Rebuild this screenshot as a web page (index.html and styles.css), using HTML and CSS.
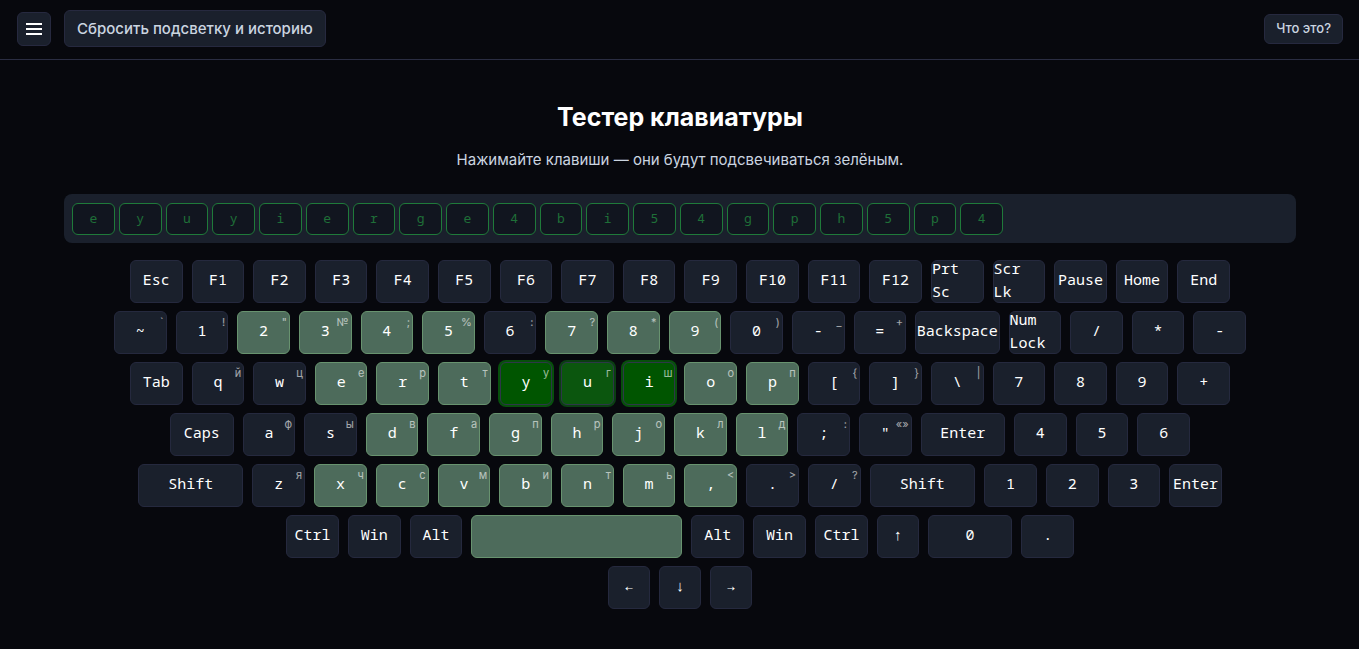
FILE: index.html
```html
<!DOCTYPE html>
<html lang="ru">
<head>
<meta charset="utf-8">
<meta name="viewport" content="width=device-width, initial-scale=1">
<title>Тестер клавиатуры</title>
<link rel="stylesheet" href="styles.css">
</head>
<body>
<header class="topbar">
  <div class="topbar-left">
    <button class="btn btn-menu" type="button" aria-label="Меню">
      <svg width="16" height="12" viewBox="0 0 16 12" aria-hidden="true"><path d="M0 0h16v2H0zM0 5h16v2H0zM0 10h16v2H0z" fill="#fff"/></svg>
    </button>
    <button class="btn btn-reset" type="button">Сбросить подсветку и историю</button>
  </div>
  <button class="btn btn-help" type="button">Что это?</button>
</header>
<main class="page">
  <h1 class="title">Тестер клавиатуры</h1>
  <p class="subtitle">Нажимайте клавиши — они будут подсвечиваться зелёным.</p>
  <section class="history" aria-label="История">
    <div class="history-list">
      <span class="chip">e</span><span class="chip">y</span><span class="chip">u</span><span class="chip">y</span><span class="chip">i</span><span class="chip">e</span><span class="chip">r</span><span class="chip">g</span><span class="chip">e</span><span class="chip">4</span><span class="chip">b</span><span class="chip">i</span><span class="chip">5</span><span class="chip">4</span><span class="chip">g</span><span class="chip">p</span><span class="chip">h</span><span class="chip">5</span><span class="chip">p</span><span class="chip">4</span>
    </div>
  </section>
  <section class="keyboard" aria-label="Клавиатура">
    <div class="row row-fn">
      <div class="key">Esc</div><div class="key">F1</div><div class="key">F2</div><div class="key">F3</div><div class="key">F4</div><div class="key">F5</div><div class="key">F6</div><div class="key">F7</div><div class="key">F8</div><div class="key">F9</div><div class="key">F10</div><div class="key">F11</div><div class="key">F12</div><div class="key">Prt Sc</div><div class="key">Scr Lk</div><div class="key">Pause</div><div class="key">Home</div><div class="key">End</div>
    </div>
    <div class="row row-digits">
      <div class="key">~<span class="alt">`</span></div>
      <div class="key">1<span class="alt">!</span></div>
      <div class="key used">2<span class="alt">"</span></div>
      <div class="key used">3<span class="alt">№</span></div>
      <div class="key used">4<span class="alt">;</span></div>
      <div class="key used">5<span class="alt">%</span></div>
      <div class="key">6<span class="alt">:</span></div>
      <div class="key used">7<span class="alt">?</span></div>
      <div class="key used">8<span class="alt">*</span></div>
      <div class="key used">9<span class="alt">(</span></div>
      <div class="key">0<span class="alt">)</span></div>
      <div class="key">-<span class="alt">_</span></div>
      <div class="key">=<span class="alt">+</span></div>
      <div class="key wide">Backspace</div>
      <div class="key">Num Lock</div>
      <div class="key">/</div><div class="key">*</div><div class="key">-</div>
    </div>
    <div class="row row-top">
      <div class="key">Tab</div>
      <div class="key">q<span class="alt">й</span></div>
      <div class="key">w<span class="alt">ц</span></div>
      <div class="key used">e<span class="alt">е</span></div>
      <div class="key used">r<span class="alt">р</span></div>
      <div class="key used">t<span class="alt">т</span></div>
      <div class="key active">y<span class="alt">у</span></div>
      <div class="key active fading">u<span class="alt">г</span></div>
      <div class="key active">i<span class="alt">ш</span></div>
      <div class="key used">o<span class="alt">о</span></div>
      <div class="key used">p<span class="alt">п</span></div>
      <div class="key">[<span class="alt">{</span></div>
      <div class="key">]<span class="alt">}</span></div>
      <div class="key">\<span class="alt">|</span></div>
      <div class="key">7</div><div class="key">8</div><div class="key">9</div><div class="key">+</div>
    </div>
    <div class="row row-home">
      <div class="key caps">Caps</div>
      <div class="key">a<span class="alt">ф</span></div>
      <div class="key">s<span class="alt">ы</span></div>
      <div class="key used">d<span class="alt">в</span></div>
      <div class="key used">f<span class="alt">а</span></div>
      <div class="key used">g<span class="alt">п</span></div>
      <div class="key used">h<span class="alt">р</span></div>
      <div class="key used">j<span class="alt">о</span></div>
      <div class="key used">k<span class="alt">л</span></div>
      <div class="key used">l<span class="alt">д</span></div>
      <div class="key">;<span class="alt">:</span></div>
      <div class="key">"<span class="alt">«»</span></div>
      <div class="key wide">Enter</div>
      <div class="key">4</div><div class="key">5</div><div class="key">6</div>
    </div>
    <div class="row row-bottom">
      <div class="key shift">Shift</div>
      <div class="key">z<span class="alt">я</span></div>
      <div class="key used">x<span class="alt">ч</span></div>
      <div class="key used">c<span class="alt">с</span></div>
      <div class="key used">v<span class="alt">м</span></div>
      <div class="key used">b<span class="alt">и</span></div>
      <div class="key used">n<span class="alt">т</span></div>
      <div class="key used">m<span class="alt">ь</span></div>
      <div class="key used">,<span class="alt">&lt;</span></div>
      <div class="key">.<span class="alt">&gt;</span></div>
      <div class="key">/<span class="alt">?</span></div>
      <div class="key shift">Shift</div>
      <div class="key">1</div><div class="key">2</div><div class="key">3</div><div class="key">Enter</div>
    </div>
    <div class="row row-space">
      <div class="key">Ctrl</div><div class="key">Win</div><div class="key">Alt</div>
      <div class="key space used"></div>
      <div class="key">Alt</div><div class="key">Win</div><div class="key">Ctrl</div>
      <div class="key arrow">↑</div><div class="key wide">0</div><div class="key">.</div>
    </div>
    <div class="row row-arrows">
      <div class="key arrow">←</div><div class="key arrow">↓</div><div class="key arrow">→</div>
    </div>
  </section>
</main>
</body>
</html>
```
FILE: styles.css
```css
* { box-sizing: border-box; }

body {
  margin: 0;
  background: #07080d;
  color: #fff;
  font-family: Inter, "Liberation Sans", sans-serif;
  font-optical-sizing: none;
}

.topbar {
  display: flex;
  align-items: center;
  justify-content: space-between;
  padding: 10px 16px 12px;
  border-bottom: 1px solid #2a2d42;
}

.topbar-left {
  display: flex;
  align-items: center;
  gap: 13px;
  padding-left: 1px;
}

.btn {
  display: flex;
  align-items: center;
  justify-content: center;
  border: 1px solid #26293f;
  border-radius: 6px;
  background: #1a202c;
  color: #cbd5e0;
  font-family: inherit;
  font-weight: 500;
}

.btn-menu { width: 34px; height: 34px; padding: 0; }
.btn-reset { padding: 6px 12px; font-size: 15px; line-height: 23px; }
.btn-help { padding: 3px 11px 5px; font-size: 13px; line-height: 20px; }

.page { padding: 40px 63px 40px 64px; }

.title {
  margin: 0;
  font-size: 25px;
  line-height: 34px;
  font-weight: 700;
  text-align: center;
}

.subtitle {
  margin: 14px 0 0;
  color: #cbd5e0;
  font-size: 15px;
  line-height: 23px;
  text-align: center;
}

.history {
  margin-top: 23px;
  padding: 9px 8px 8px;
  border-radius: 8px;
  background: #1a202c;
}

.history-list {
  display: flex;
  gap: 4px;
  max-width: 931px;
}

.chip {
  flex: 1;
  height: 32px;
  border: 1px solid #1f7a3a;
  border-radius: 6px;
  background: #11151f;
  color: #1f6f38;
  font-family: "Noto Sans Mono", "DejaVu Sans Mono", monospace;
  font-size: 13px;
  line-height: 28px;
  text-align: center;
}

.keyboard {
  display: flex;
  flex-direction: column;
  align-items: center;
  gap: 8px;
  margin-top: 17px;
}

.row { display: flex; gap: 9px; width: 100%; }
.row-fn, .row-top { max-width: 1100px; }
.row-digits { max-width: 1132px; }
.row-home { max-width: 1020px; }
.row-bottom { max-width: 1084px; }
.row-space { max-width: 788px; }
.row-arrows { max-width: 144px; }

.key {
  position: relative;
  display: flex;
  flex: 0 1 53px;
  align-items: center;
  justify-content: center;
  min-width: 0;
  height: 43px;
  padding-bottom: 4px;
  border: 1px solid #25293e;
  border-radius: 6px;
  background: #1a202c;
  font-family: "Noto Sans Mono", "DejaVu Sans Mono", monospace;
  font-size: 15px;
  line-height: 23px;
}

.arrow { flex-basis: 42px; }
.caps { flex-basis: 64px; }
.wide { flex-basis: 85px; }
.shift { flex-basis: 106px; }
.space { flex-basis: 212px; }

.used { border-color: #68936f; background: #4d6b5b; }

.active {
  border-color: #2d3748;
  background: #005500;
  box-shadow: 0 0 0 2px #07500c;
}

.fading { background: #0b560e; box-shadow: 0 0 0 2px #0a3f12; }

.alt {
  position: absolute;
  top: 2px;
  right: 2px;
  font-family: Inter, "Liberation Sans", sans-serif;
  font-size: 11px;
  line-height: 17px;
  opacity: 0.6;
}
```
